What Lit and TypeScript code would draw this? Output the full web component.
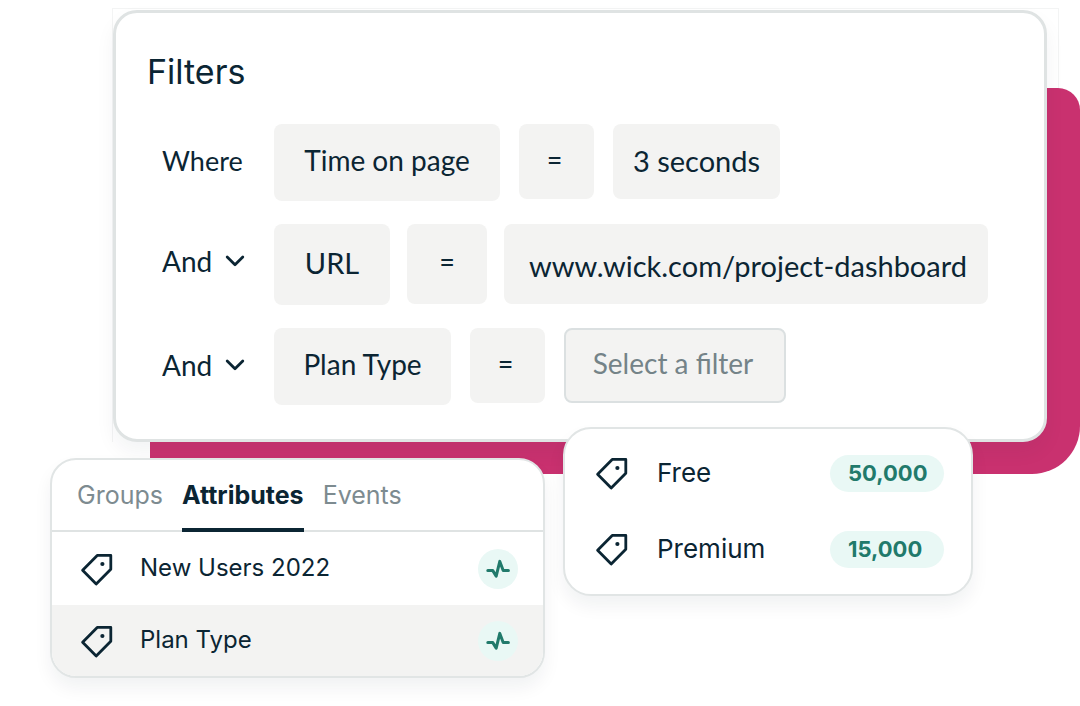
import { LitElement, html, css } from "lit";
import { customElement, property, state } from "lit/decorators.js";
import { classMap } from "lit/directives/class-map.js";

const ink = css`#0b2533`;

interface Filter {
  id: string;
  join: "where" | "and";
  field: string;
  value: string;
  size: "regular" | "large";
  kind: string;
}

const FILTERS: Filter[] = [
  { id: "time", join: "where", field: "Time on page", value: "3 seconds", size: "regular", kind: "time" },
  { id: "url", join: "and", field: "URL", value: "www.wick.com/project-dashboard", size: "large", kind: "url" },
  { id: "plan", join: "and", field: "Plan Type", value: "", size: "regular", kind: "plan" },
];

const PLANS = [
  { name: "Free", count: "50,000" },
  { name: "Premium", count: "15,000" },
];

@customElement("tag-icon")
class TagIcon extends LitElement {
  static styles = css`
    :host {
      display: block;
      flex: none;
      width: 34px;
      height: 34px;
      color: ${ink};
    }
    svg {
      display: block;
    }
  `;
  render() {
    return html`<svg width="34" height="34" viewBox="0 0 34 34" fill="none" aria-hidden="true">
      <path d="M17.2 3.4H30.8V17.2L16.2 32L2.6 18.2Z" stroke="currentColor" stroke-width="2.8" stroke-linejoin="round" />
      <circle cx="22.4" cy="12" r="2.1" fill="currentColor" />
    </svg>`;
  }
}

@customElement("filter-row")
class FilterRow extends LitElement {
  @property({ attribute: false }) filter!: Filter;

  static styles = css`
    :host {
      display: block;
    }
    .row {
      display: grid;
      grid-template-columns: 93px minmax(0, 1fr);
      column-gap: 19px;
      font: 400 27px/32px Lato, sans-serif;
      color: ${ink};
    }
    .join {
      position: relative;
      display: flex;
      align-items: center;
      height: 74px;
    }
    .chips {
      display: flex;
      align-items: flex-start;
      gap: 19px;
    }
    .large .chips {
      gap: 17px;
    }
    .join select {
      appearance: none;
      width: 84px;
      padding: 0;
      border: 0;
      background: none;
      font: inherit;
      font-size: 28px;
      color: inherit;
    }
    .join svg {
      position: absolute;
      right: 10px;
      top: 30px;
      pointer-events: none;
    }
    .chip {
      appearance: none;
      box-sizing: border-box;
      min-width: 0;
      height: 75px;
      margin: 0;
      padding: 0 0 6px;
      border: 0;
      border-radius: 8px;
      background: #f3f3f2;
      font: inherit;
      font-size: 28px;
      color: inherit;
      text-align: center;
    }
    .field {
      height: 77px;
    }
    .large .chip {
      height: 80px;
    }
    .large .field {
      height: 81px;
      padding-bottom: 4px;
      font-size: 29px;
    }
    .op {
      width: 75px;
      padding-right: 4px;
      font-family: Inter, sans-serif;
      font-size: 26px;
    }
    .large .op {
      width: 80px;
      padding-right: 0;
    }
    .time .field {
      width: 226px;
    }
    .time .value {
      width: 167px;
      padding-bottom: 2px;
      font-size: 29px;
    }
    .url .field {
      width: 116px;
    }
    .url .value {
      width: 484px;
      padding: 2px 0 0 4px;
      font-size: 29px;
    }
    .plan .field {
      width: 177px;
    }
    .plan .value {
      width: 222px;
      padding-right: 4px;
      border: 2px solid #dbe0e1;
      color: #748388;
    }
  `;

  render() {
    const f = this.filter;
    return html`<div class=${classMap({ row: true, large: f.size === "large", [f.kind]: true })}>
      <div class="join">
        ${f.join === "where"
          ? html`<span>Where</span>`
          : html`<select aria-label="Join condition">
                <option>And</option>
                <option>Or</option>
              </select>
              <svg width="20" height="14" viewBox="0 0 20 14" fill="none" aria-hidden="true">
                <path d="M2.2 3L10 10.8L17.8 3" stroke="#0b2533" stroke-width="2.8" stroke-linecap="round" stroke-linejoin="round" />
              </svg>`}
      </div>
      <div class="chips">
        <button class="chip field" type="button">${f.field}</button>
        <button class="chip op" type="button" aria-label="equals">=</button>
        ${f.value
          ? html`<input class="chip value" type="text" aria-label="${f.field} value" .value=${f.value} />`
          : html`<select class="chip value" aria-label="${f.field} value">
              <option>Select a filter</option>
              ${PLANS.map((p) => html`<option>${p.name}</option>`)}
            </select>`}
      </div>
    </div>`;
  }
}

@customElement("attribute-panel")
class AttributePanel extends LitElement {
  @state() private active = "Attributes";

  static styles = css`
    :host {
      display: block;
      box-sizing: border-box;
      overflow: hidden;
      border: 2px solid #e1e5e5;
      border-radius: 26px;
      background: #fff;
      box-shadow: 0 10px 18px rgba(11, 37, 51, 0.06);
      font: 400 24px/32px Inter, sans-serif;
      color: ${ink};
    }
    .tabs {
      display: flex;
      gap: 19px;
      height: 70px;
      padding-left: 25px;
      border-bottom: 2px solid #dfe3e3;
    }
    .tab {
      box-sizing: border-box;
      height: 72px;
      margin: 0;
      padding: 2px 0 0;
      border: 0;
      border-bottom: 4px solid transparent;
      background: none;
      font: inherit;
      font-size: 25px;
      color: #7d8b90;
    }
    .tab.active {
      border-color: ${ink};
      font-weight: 700;
      color: ${ink};
    }
    .list {
      margin: 0;
      padding: 0;
      list-style: none;
    }
    .item {
      display: flex;
      align-items: center;
      height: 73px;
      padding: 0 25px 0 28px;
    }
    .item:last-child {
      height: 71px;
      background: #f3f3f2;
    }
    .name {
      flex: 1;
      margin-left: 26px;
      padding-bottom: 2px;
    }
    .pulse {
      display: grid;
      place-items: center;
      width: 40px;
      height: 40px;
      border-radius: 50%;
      background: #e9f8f5;
    }
  `;

  render() {
    return html`<div class="tabs" role="tablist">
        ${["Groups", "Attributes", "Events"].map(
          (t) => html`<button
            class=${classMap({ tab: true, active: t === this.active })}
            type="button"
            role="tab"
            aria-selected=${t === this.active}
            @click=${() => (this.active = t)}
          >${t}</button>`
        )}
      </div>
      <ul class="list">
        ${["New Users 2022", "Plan Type"].map(
          (name) => html`<li class="item">
            <tag-icon></tag-icon>
            <span class="name">${name}</span>
            <span class="pulse">
              <svg width="26" height="22" viewBox="0 0 26 22" fill="none" aria-hidden="true">
                <path d="M2.8 12.6H7.8L11.2 18.2L14.8 3.4L18.2 12.6H23.4" stroke="#217a6b" stroke-width="3" stroke-linecap="round" stroke-linejoin="round" />
              </svg>
            </span>
          </li>`
        )}
      </ul>`;
  }
}

@customElement("plan-menu")
class PlanMenu extends LitElement {
  static styles = css`
    :host {
      display: block;
      box-sizing: border-box;
      padding: 6px 27px 7px 30px;
      border: 2px solid #e1e5e5;
      border-radius: 28px;
      background: #fff;
      box-shadow: 0 10px 18px rgba(11, 37, 51, 0.06);
      font: 400 26px/32px Inter, sans-serif;
      color: ${ink};
    }
    .list {
      margin: 0;
      padding: 0;
      list-style: none;
    }
    .item {
      display: flex;
      align-items: center;
      height: 76px;
    }
    .name {
      flex: 1;
      margin-left: 28px;
    }
    .count {
      box-sizing: border-box;
      width: 114px;
      padding: 2px 0 3px 18px;
      border-radius: 19px;
      background: #e9f8f5;
      font-size: 22px;
      font-weight: 700;
      color: #217a6b;
    }
  `;

  render() {
    return html`<ul class="list">
      ${PLANS.map(
        (p) => html`<li class="item">
          <tag-icon></tag-icon>
          <span class="name">${p.name}</span>
          <span class="count">${p.count}</span>
        </li>`
      )}
    </ul>`;
  }
}

@customElement("app-root")
class AppRoot extends LitElement {
  static styles = css`
    :host {
      display: block;
      min-height: 100vh;
      box-sizing: border-box;
      padding-top: 10px;
      background: #fff;
      overflow: hidden;
    }
    .board {
      position: relative;
      margin: 0 33px 0 113px;
    }
    .frame {
      position: absolute;
      inset: -2px -12px 0 -1px;
      border: 1px solid #f3f4f4;
      border-bottom: 0;
    }
    .backdrop {
      position: absolute;
      inset: 78px -33px -32px 37px;
      border-radius: 0 22px 48px 0;
      background: #c9316f;
    }
    .card {
      position: relative;
      padding: 39px 31px 34px;
      border: 3px solid #dfe3e3;
      border-radius: 24px;
      background: #fff;
      box-shadow: 0 10px 20px rgba(11, 37, 51, 0.05);
    }
    .title {
      margin: 0 0 32px;
      font: 400 34px/40px Inter, sans-serif;
      color: ${ink};
    }
    .rows {
      display: grid;
      gap: 23px;
      padding-left: 15px;
    }
    .panels {
      position: relative;
      display: grid;
      grid-template-columns: minmax(0, 495fr) minmax(0, 410fr);
      align-items: start;
      gap: 18px;
      margin: -15px 107px 0 50px;
    }
    attribute-panel {
      margin-top: 31px;
    }
  `;

  render() {
    return html`<main>
      <section class="board">
        <div class="frame"></div>
        <div class="backdrop"></div>
        <div class="card">
          <h1 class="title">Filters</h1>
          <div class="rows">${FILTERS.map((f) => html`<filter-row .filter=${f}></filter-row>`)}</div>
        </div>
      </section>
      <div class="panels">
        <attribute-panel></attribute-panel>
        <plan-menu></plan-menu>
      </div>
    </main>`;
  }
}
